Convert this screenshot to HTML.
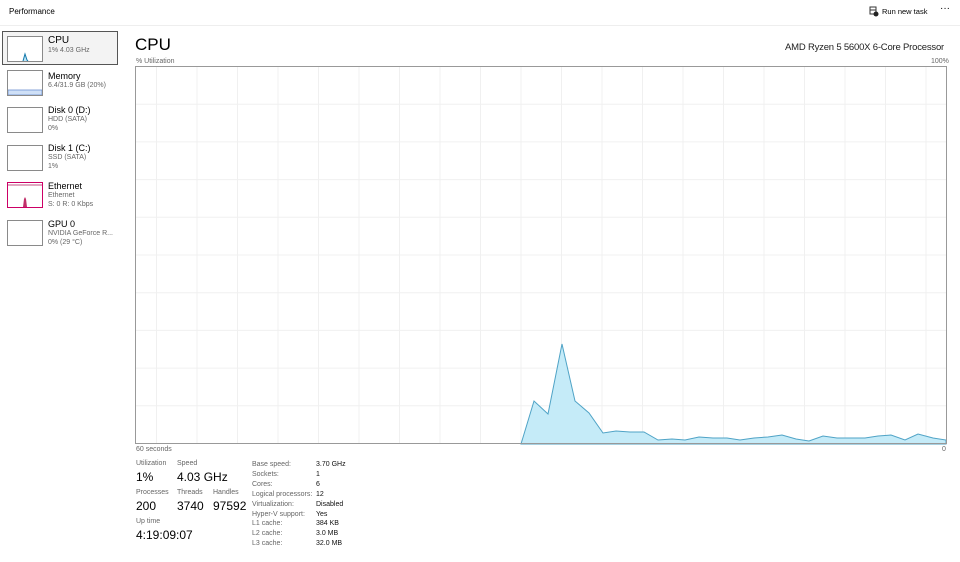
<!DOCTYPE html>
<html><head><meta charset="utf-8"><style>
body{margin:0;width:960px;height:562px;background:#fff;font-family:"Liberation Sans",sans-serif;color:#000;position:relative;overflow:hidden}
.a{position:absolute;white-space:nowrap}
.s{font-size:7px;color:#666}
.th{position:absolute;left:7px;width:34px;height:24px;border:1px solid #8a8a8a;background:#fff}
.v{font-size:12px}
</style></head><body>
<div class="a" style="left:9px;top:7px;font-size:8px">Performance</div>
<div class="a" style="left:0;top:25px;width:960px;height:1px;background:#eee"></div>
<svg class="a" style="left:869px;top:6px" width="10" height="11" viewBox="0 0 10 11"><rect x="1" y="1" width="6" height="7" fill="none" stroke="#333" stroke-width="1"/><line x1="1" y1="4" x2="7" y2="4" stroke="#333"/><circle cx="7" cy="8" r="2.5" fill="#222"/></svg>
<div class="a" style="left:882px;top:7px;font-size:7.5px">Run new task</div>
<div class="a" style="left:940px;top:3px;font-size:10px">···</div>

<div class="a" style="left:2px;top:31px;width:114px;height:32px;border:1px solid #555;background:#f3f3f3"></div>
<div class="th" style="top:36px"><svg width="34" height="24"><polyline points="15,24 17,17 19,23 20,24" fill="#bfe6f7" stroke="#17a"/></svg></div>
<div class="a" style="left:48px;top:35px;font-size:10px">CPU</div><div class="a s" style="left:48px;top:47px">1% 4.03 GHz</div>
<div class="th" style="top:70px"><svg width="34" height="24"><rect x="0" y="19" width="34" height="5" fill="#cfe0f7" stroke="#6b8fd0" stroke-width=".8"/></svg></div>
<div class="a" style="left:48px;top:71px;font-size:9px">Memory</div><div class="a s" style="left:48px;top:82px">6.4/31.9 GB (20%)</div>
<div class="th" style="top:107px"></div>
<div class="a" style="left:48px;top:105px;font-size:9px">Disk 0 (D:)</div><div class="a s" style="left:48px;top:116px">HDD (SATA)</div><div class="a s" style="left:48px;top:125px">0%</div>
<div class="th" style="top:145px"></div>
<div class="a" style="left:48px;top:143px;font-size:9px">Disk 1 (C:)</div><div class="a s" style="left:48px;top:154px">SSD (SATA)</div><div class="a s" style="left:48px;top:163px">1%</div>
<div class="th" style="top:182px;border-color:#c06"><svg width="34" height="24"><line x1="0" y1="2" x2="34" y2="2" stroke="#c05080"/><path d="M15 24 L16 16 L17 14 L18 16 L19 24Z" fill="#c0306a"/></svg></div>
<div class="a" style="left:48px;top:181px;font-size:9px">Ethernet</div><div class="a s" style="left:48px;top:192px">Ethernet</div><div class="a s" style="left:48px;top:201px">S: 0 R: 0 Kbps</div>
<div class="th" style="top:220px"></div>
<div class="a" style="left:48px;top:219px;font-size:9px">GPU 0</div><div class="a s" style="left:48px;top:230px">NVIDIA GeForce R...</div><div class="a s" style="left:48px;top:239px">0% (29 °C)</div>

<div class="a" style="left:135px;top:35px;font-size:17px">CPU</div>
<div class="a" style="right:16px;top:42px;font-size:9.5px;color:#222;letter-spacing:-0.2px">AMD Ryzen 5 5600X 6-Core Processor</div>
<div class="a s" style="left:136px;top:58px">% Utilization</div>
<div class="a s" style="left:931px;top:58px">100%</div>
<svg class="a" style="left:135px;top:66px" width="812" height="379">
<g stroke="#f0f0f0" stroke-width="1">
<line x1="0" y1="38.2" x2="812" y2="38.2"/><line x1="0" y1="75.9" x2="812" y2="75.9"/><line x1="0" y1="113.6" x2="812" y2="113.6"/><line x1="0" y1="151.3" x2="812" y2="151.3"/><line x1="0" y1="189" x2="812" y2="189"/><line x1="0" y1="226.7" x2="812" y2="226.7"/><line x1="0" y1="264.4" x2="812" y2="264.4"/><line x1="0" y1="302.1" x2="812" y2="302.1"/><line x1="0" y1="339.8" x2="812" y2="339.8"/>
<line x1="21.5" y1="0" x2="21.5" y2="378"/><line x1="62" y1="0" x2="62" y2="378"/><line x1="102.5" y1="0" x2="102.5" y2="378"/><line x1="143" y1="0" x2="143" y2="378"/><line x1="183.5" y1="0" x2="183.5" y2="378"/><line x1="224" y1="0" x2="224" y2="378"/><line x1="264.5" y1="0" x2="264.5" y2="378"/><line x1="305" y1="0" x2="305" y2="378"/><line x1="345.5" y1="0" x2="345.5" y2="378"/><line x1="386" y1="0" x2="386" y2="378"/><line x1="426.5" y1="0" x2="426.5" y2="378"/><line x1="467" y1="0" x2="467" y2="378"/><line x1="507.5" y1="0" x2="507.5" y2="378"/><line x1="548" y1="0" x2="548" y2="378"/><line x1="588.5" y1="0" x2="588.5" y2="378"/><line x1="629" y1="0" x2="629" y2="378"/><line x1="669.5" y1="0" x2="669.5" y2="378"/><line x1="710" y1="0" x2="710" y2="378"/><line x1="750.5" y1="0" x2="750.5" y2="378"/><line x1="791" y1="0" x2="791" y2="378"/>
</g>
<g transform="translate(-135,-66)">
<polygon points="521,444 534,401 548,414 562,344 575,401 589,413 603,433 616,431 630,432 644,432 658,440 672,439 685,440 699,437 713,438 727,438 740,440 754,438 768,437 782,435 796,439 809,441 823,436 837,438 850,438 865,438 878,436 891,435 905,440 918,434 933,438 946,440 946,444" fill="#c5ebf8" stroke="#4fa3c6" stroke-width="1"/>
</g>
<rect x="0.5" y="0.5" width="811" height="377" fill="none" stroke="#999"/>
</svg>
<div class="a s" style="left:136px;top:446px">60 seconds</div>
<div class="a s" style="left:942px;top:446px">0</div>

<div class="a s" style="left:136px;top:460px">Utilization</div><div class="a v" style="left:136px;top:470px">1%</div>
<div class="a s" style="left:177px;top:460px">Speed</div><div class="a v" style="left:177px;top:470px">4.03 GHz</div>
<div class="a s" style="left:136px;top:489px">Processes</div><div class="a v" style="left:136px;top:499px">200</div>
<div class="a s" style="left:177px;top:489px">Threads</div><div class="a v" style="left:177px;top:499px">3740</div>
<div class="a s" style="left:213px;top:489px">Handles</div><div class="a v" style="left:213px;top:499px">97592</div>
<div class="a s" style="left:136px;top:518px">Up time</div><div class="a v" style="left:136px;top:528px">4:19:09:07</div>
<div class="a s" style="left:252px;top:460px;line-height:9.9px">Base speed:<br>Sockets:<br>Cores:<br>Logical processors:<br>Virtualization:<br>Hyper-V support:<br>L1 cache:<br>L2 cache:<br>L3 cache:</div>
<div class="a" style="left:316px;top:460px;line-height:9.9px;font-size:7px;color:#111">3.70 GHz<br>1<br>6<br>12<br>Disabled<br>Yes<br>384 KB<br>3.0 MB<br>32.0 MB</div>
</body></html>
